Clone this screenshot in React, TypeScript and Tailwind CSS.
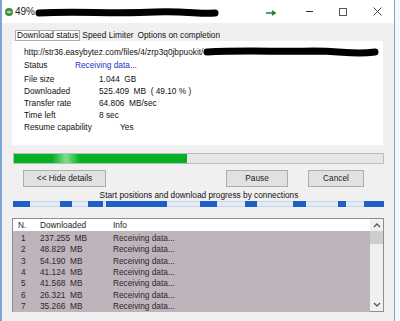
import React from 'react';

const rows = [
  ['1', '237.255'],
  ['2', '48.829'],
  ['3', '54.190'],
  ['4', '41.124'],
  ['5', '41.568'],
  ['6', '26.321'],
  ['7', '35.266'],
];

// blue segments on the connections bar, [left, width] in px from bar start
const segments = [
  [0, 17],
  [47, 12],
  [75, 15],
  [93, 61],
  [187, 17],
  [232, 12],
  [280, 13],
  [325, 8],
  [351, 20],
];

const Scribble = ({ w, d }: { w: number; d: string }) => (
  <svg width={w} height="12" viewBox={`0 0 ${w} 12`} className="block">
    <path d={d} stroke="#000" strokeWidth="7" strokeLinecap="round" strokeLinejoin="round" fill="none" />
  </svg>
);

const Btn = ({ label, w }: { label: string; w: string }) => (
  <div
    className={`h-[17px] ${w} bg-[#e1e1e1] border border-[#adadad] flex items-center justify-center text-[#222]`}
  >
    {label}
  </div>
);

export default function App() {
  return (
    <div
      className="w-[400px] h-[321px] bg-[#f7f7f7] overflow-hidden text-[8.3px] text-[#111]"
      style={{ fontFamily: '"Liberation Sans", Arial, sans-serif' }}
    >
      <div className="w-[395px] h-[321px] flex flex-col border-l-2 border-r border-[#7ca5d6] bg-[#f0f0f0]">
        {/* title bar */}
        <div className="h-[23px] bg-white flex items-center shrink-0">
          <svg width="10" height="10" viewBox="0 0 10 10" className="ml-[2px] mt-[1px]">
            <circle cx="5" cy="5" r="4" fill="#3f8a3a" />
            <path d="M2 5 Q5 2 8 5 Q5 8 2 5" fill="#9fd18f" />
          </svg>
          <span className="ml-[1px] text-[10px] text-[#222]">49%</span>
          <Scribble w={184} d="M4 7 C40 5 80 8 120 6 C150 5 165 8 180 7" />
          <div className="flex-1" />
          <svg width="12" height="6" viewBox="0 0 12 6" className="mt-[3px] mr-[15px]">
            <path d="M1 3 H9 M7 1 L10 3 L7 5" stroke="#2f7a2f" strokeWidth="1.6" fill="none" />
          </svg>
          <div className="w-[34px] flex justify-center">
            <div className="w-[7px] h-px bg-[#333]" />
          </div>
          <div className="w-[34px] flex justify-center">
            <div className="w-[8px] h-[8px] border border-[#555]" />
          </div>
          <div className="w-[34px] flex justify-center">
            <svg width="9" height="9" viewBox="0 0 9 9">
              <path d="M0.5 0.5 L8.5 8.5 M8.5 0.5 L0.5 8.5" stroke="#333" strokeWidth="0.9" />
            </svg>
          </div>
        </div>

        <div className="flex-1 pl-[10px] pr-[10px]">
          {/* tabs */}
          <div className="flex items-end h-[18px]">
            <div className="ml-[3px] h-[11px] px-px bg-white border border-[#adadad] flex items-center leading-none">
              Download status
            </div>
            <div className="ml-[2px] h-[11px] flex items-center leading-none">Speed Limiter</div>
            <div className="ml-[4px] h-[11px] flex items-center leading-none">Options on completion</div>
          </div>

          {/* details panel */}
          <div className="h-[104px] w-[371px] bg-white pl-[12px] pt-[5px] leading-[12px]">
            <div className="flex items-center h-[12px]">
              <span>http://str36.easybytez.com/files/4/zrp3q0jbpuokit/</span>
              <Scribble w={178} d="M4 6 C40 4 80 6 110 5 C140 5 150 9 172 6" />
            </div>
            <div className="flex h-[12px] mt-[1px]">
              <span className="w-[51px]">Status</span>
              <span className="text-[#2033c8]">Receiving data...</span>
            </div>
            <div className="mt-[2px]">
              <div className="flex h-[12px]">
                <span className="w-[75px]">File size</span>
                <span className="whitespace-pre">1.044  GB</span>
              </div>
              <div className="flex h-[12px]">
                <span className="w-[75px]">Downloaded</span>
                <span className="whitespace-pre">525.409  MB  ( 49.10 % )</span>
              </div>
              <div className="flex h-[12px]">
                <span className="w-[75px]">Transfer rate</span>
                <span className="whitespace-pre">64.806  MB/sec</span>
              </div>
              <div className="flex h-[12px]">
                <span className="w-[75px]">Time left</span>
                <span>8 sec</span>
              </div>
              <div className="flex h-[12px]">
                <span className="w-[96px]">Resume capability</span>
                <span>Yes</span>
              </div>
            </div>
          </div>

          {/* progress */}
          <div className="mt-[8px] ml-[1px] w-[371px] h-[11px] bg-[#e6e6e6] border border-[#bcbcbc]">
            <div className="h-full w-[173px] bg-[linear-gradient(90deg,#06b025_0%,#06b025_22%,#7ee08c_30%,#06b025_38%,#06b025_100%)]" />
          </div>

          {/* buttons */}
          <div className="flex mt-[6px]">
            <div className="ml-[11px]">
              <Btn label="<< Hide details" w="w-[83px]" />
            </div>
            <div className="ml-[120px]">
              <Btn label="Pause" w="w-[62px]" />
            </div>
            <div className="ml-[20px]">
              <Btn label="Cancel" w="w-[56px]" />
            </div>
          </div>

          <div className="text-center h-[12px] leading-[12px] mt-[2px] pl-[2px]">
            Start positions and download progress by connections
          </div>

          {/* connections bar */}
          <div className="relative ml-[1px] w-[371px] h-[6px] bg-[#e3ebf6] border-y border-[#c9d6e8]">
            {segments.map(([l, w], i) => (
              <div
                key={i}
                className="absolute top-[-1px] h-[6px] bg-[#1d5ec9]"
                style={{ left: l, width: w }}
              />
            ))}
          </div>

          {/* connections list */}
          <div className="mt-[11px] w-[372px] h-[94px] border border-[#8a8e96] flex bg-white">
            <div className="flex-1 flex flex-col">
              <div className="h-[13px] flex items-center bg-white text-[#222]">
                <span className="w-[27px] pl-[5px]">N.</span>
                <span className="w-[73px]">Downloaded</span>
                <span>Info</span>
              </div>
              <div className="flex-1 bg-[#bfb4bc] text-[#2a2a2a] pt-[1px]">
                {rows.map(([n, v]) => (
                  <div key={n} className="flex items-center h-[11.4px]">
                    <span className="w-[27px] pl-[8px]">{n}</span>
                    <span className="w-[73px] whitespace-pre">{v}  MB</span>
                    <span>Receiving data...</span>
                  </div>
                ))}
              </div>
            </div>
            <div className="w-[13px] bg-[#f0f0f0] flex flex-col items-center">
              <svg width="8" height="5" viewBox="0 0 8 5" className="mt-[4px]">
                <path d="M1 4 L4 1 L7 4" stroke="#555" strokeWidth="1.3" fill="none" />
              </svg>
              <div className="mt-[3px] w-[13px] h-[13px] bg-[#cdcdcd]" />
              <div className="flex-1" />
              <svg width="8" height="5" viewBox="0 0 8 5" className="mb-[4px]">
                <path d="M1 1 L4 4 L7 1" stroke="#555" strokeWidth="1.3" fill="none" />
              </svg>
            </div>
          </div>
        </div>
      </div>
    </div>
  );
}
